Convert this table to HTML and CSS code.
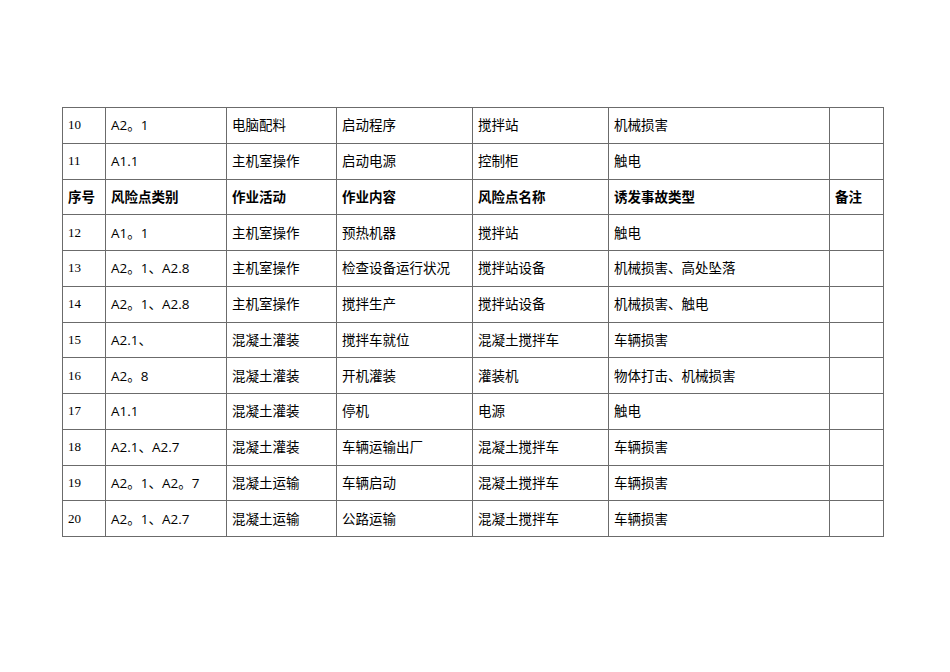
FILE: index.html
```html
<!DOCTYPE html>
<html lang="zh">
<head>
<meta charset="utf-8">
<link rel="stylesheet" href="styles.css">
</head>
<body>
<table class="risk">
<colgroup>
<col class="c1"><col class="c2"><col class="c3"><col class="c4"><col class="c5"><col class="c6"><col class="c7">
</colgroup>
<tbody>
<tr><td class="num">10</td><td>A2。1</td><td>电脑配料</td><td>启动程序</td><td>搅拌站</td><td>机械损害</td><td></td></tr>
<tr><td class="num">11</td><td>A1.1</td><td>主机室操作</td><td>启动电源</td><td>控制柜</td><td>触电</td><td></td></tr>
<tr class="head"><td>序号</td><td>风险点类别</td><td>作业活动</td><td>作业内容</td><td>风险点名称</td><td>诱发事故类型</td><td>备注</td></tr>
<tr><td class="num">12</td><td>A1。1</td><td>主机室操作</td><td>预热机器</td><td>搅拌站</td><td>触电</td><td></td></tr>
<tr><td class="num">13</td><td>A2。1、A2.8</td><td>主机室操作</td><td>检查设备运行状况</td><td>搅拌站设备</td><td>机械损害、高处坠落</td><td></td></tr>
<tr><td class="num">14</td><td>A2。1、A2.8</td><td>主机室操作</td><td>搅拌生产</td><td>搅拌站设备</td><td>机械损害、触电</td><td></td></tr>
<tr><td class="num">15</td><td>A2.1、</td><td>混凝土灌装</td><td>搅拌车就位</td><td>混凝土搅拌车</td><td>车辆损害</td><td></td></tr>
<tr><td class="num">16</td><td>A2。8</td><td>混凝土灌装</td><td>开机灌装</td><td>灌装机</td><td>物体打击、机械损害</td><td></td></tr>
<tr><td class="num">17</td><td>A1.1</td><td>混凝土灌装</td><td>停机</td><td>电源</td><td>触电</td><td></td></tr>
<tr><td class="num">18</td><td>A2.1、A2.7</td><td>混凝土灌装</td><td>车辆运输出厂</td><td>混凝土搅拌车</td><td>车辆损害</td><td></td></tr>
<tr><td class="num">19</td><td>A2。1、A2。7</td><td>混凝土运输</td><td>车辆启动</td><td>混凝土搅拌车</td><td>车辆损害</td><td></td></tr>
<tr><td class="num">20</td><td>A2。1、A2.7</td><td>混凝土运输</td><td>公路运输</td><td>混凝土搅拌车</td><td>车辆损害</td><td></td></tr>
</tbody>
</table>
</body>
</html>
```
FILE: styles.css
```css
html, body {
  margin: 0;
  padding: 0;
  background: #ffffff;
}
body {
  padding: 107px 0 0 62px;
  font-family: "Open Sans", "Noto Sans CJK SC", sans-serif;
  font-size: 13.5px;
  color: #000;
}
.risk {
  border-collapse: collapse;
  table-layout: fixed;
  width: 821px;
}
.c1 { width: 43px; }
.c2 { width: 121px; }
.c3 { width: 110px; }
.c4 { width: 136px; }
.c5 { width: 136px; }
.c6 { width: 221px; }
.c7 { width: 54px; }
.risk td {
  border: 1px solid #6b6b6b;
  height: 34.75px;
  padding: 0 0 0 5px;
  vertical-align: middle;
  white-space: nowrap;
  line-height: 16px;
}
.risk td.num {
  font-family: "Liberation Serif", "Noto Sans CJK SC", serif;
  font-size: 13px;
}
.risk tr.head td {
  font-weight: bold;
}
```
